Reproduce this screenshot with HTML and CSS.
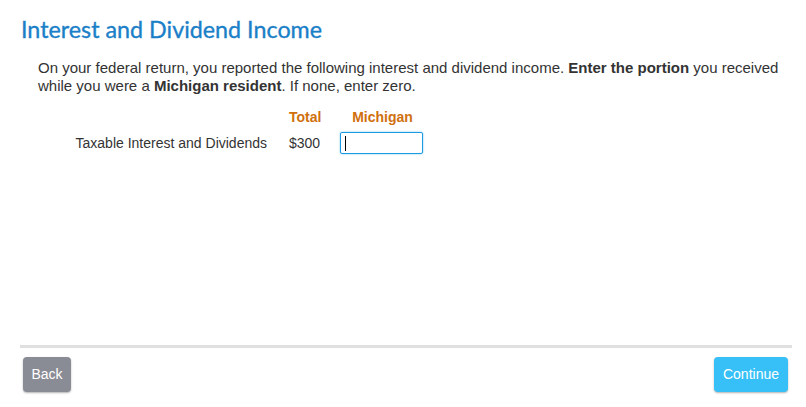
FILE: index.html
```html
<!DOCTYPE html>
<html lang="en">
<head>
<meta charset="utf-8">
<title>Interest and Dividend Income</title>
<link rel="stylesheet" href="styles.css">
</head>
<body>
<div class="page">
  <main class="content">
    <h1 class="title">Interest and Dividend Income</h1>
    <p class="intro">On your federal return, you reported the following interest and dividend income. <b>Enter the portion</b> you received while you were a <b>Michigan resident</b>. If none, enter zero.</p>
    <div class="grid">
      <div class="cell"></div>
      <div class="cell head">Total</div>
      <div class="cell head">Michigan</div>
      <div class="cell label">Taxable Interest and Dividends</div>
      <div class="cell amount">$300</div>
      <div class="cell"><span class="field-wrap"><input class="field" type="text" autofocus></span></div>
    </div>
  </main>
  <footer class="footer">
    <div class="actions">
      <button class="btn btn-back" type="button">Back</button>
      <button class="btn btn-continue" type="button">Continue</button>
    </div>
  </footer>
</div>
</body>
</html>
```

FILE: styles.css
```css
html, body {
  margin: 0;
  padding: 0;
  background: #fff;
}
body {
  font-family: "Liberation Sans", Arial, sans-serif;
  font-size: 14px;
  color: #333;
}
.page {
  height: 407px;
  box-sizing: border-box;
  padding: 0 14px 0 20px;
  display: flex;
  flex-direction: column;
}
.content {
  flex: 1;
}
.title {
  font-family: Lato, "Open Sans", sans-serif;
  font-weight: 400;
  font-size: 23.3px;
  line-height: 26px;
  color: #1b7fc8;
  -webkit-text-stroke: 0.35px #1b7fc8;
  margin: 16px 0 0 1px;
}
.intro {
  margin: 17px 0 0 18px;
  font-size: 15px;
  line-height: 18px;
}
.grid {
  display: grid;
  grid-template-columns: 229px 31px 83px;
  column-gap: 22px;
  margin: 13px 0 0 18px;
  align-items: baseline;
}
.grid > :nth-child(3n) {
  margin-left: -2px;
}
.cell {
  white-space: nowrap;
}
.head {
  font-weight: 700;
  color: #d0700e;
  text-align: center;
  line-height: 18px;
}
.label {
  text-align: right;
}
.amount {
  text-align: center;
}
.field-wrap {
  position: relative;
  display: inline-block;
  margin-top: 6px;
}
.field-wrap::after {
  content: "";
  position: absolute;
  left: 5px;
  top: 4px;
  width: 1px;
  height: 15px;
  background: #000;
}
.field {
  display: block;
  box-sizing: border-box;
  width: 83px;
  height: 22px;
  margin: 0;
  border: 1px solid #1d9be2;
  border-radius: 2px;
  outline: none;
  box-shadow: 0 0 2px rgba(29, 155, 226, 0.6);
  font-family: inherit;
  font-size: 14px;
  padding: 0 4px;
  caret-color: transparent;
}
.footer {
  border-top: 3px solid #e0e0e0;
  margin-bottom: 15px;
}
.actions {
  display: flex;
  justify-content: space-between;
  padding: 9px 4px 0 3px;
}
.btn {
  height: 35px;
  border: none;
  border-radius: 4px;
  color: #fff;
  font-family: "Liberation Sans", Arial, sans-serif;
  font-size: 14px;
  padding: 0 8px 2px;
  box-shadow: 0 1px 2px rgba(0, 0, 0, 0.3);
  cursor: pointer;
}
.btn-back {
  background: #8a8c95;
  width: 48px;
}
.btn-continue {
  background: #36c0f7;
  width: 74px;
}
```
